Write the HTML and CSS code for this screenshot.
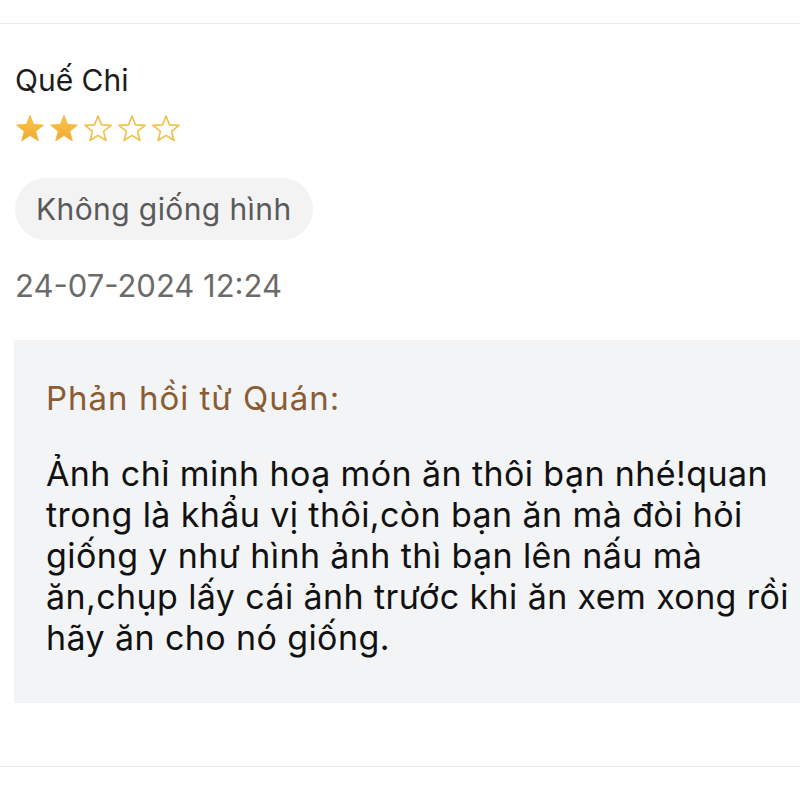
FILE: index.html
```html
<!DOCTYPE html>
<html lang="vi">
<head>
<meta charset="utf-8">
<link rel="stylesheet" href="styles.css">
</head>
<body>
<div class="page">
  <div class="divider top"></div>
  <div class="review">
    <div class="name">Quế Chi</div>
    <div class="stars">
      <svg class="star" viewBox="-1 -1 32 30"><defs><linearGradient id="g" x1="0" y1="0" x2="0" y2="1"><stop offset="0" stop-color="#f9c64c"/><stop offset="1" stop-color="#f0a832"/></linearGradient></defs><path d="M15 0L18.82 9.74 29.27 10.36 21.18 17.01 23.82 27.14 15 21.5 6.18 27.14 8.82 17.01 0.73 10.36 11.18 9.74Z" fill="url(#g)" stroke="#f3b840" stroke-width="1" stroke-linejoin="round"/></svg>
      <svg class="star" viewBox="-1 -1 32 30"><path d="M15 0L18.82 9.74 29.27 10.36 21.18 17.01 23.82 27.14 15 21.5 6.18 27.14 8.82 17.01 0.73 10.36 11.18 9.74Z" fill="url(#g)" stroke="#f3b840" stroke-width="1" stroke-linejoin="round"/></svg>
      <svg class="star" viewBox="-1 -1 32 30"><path d="M15 0.6L18.7 10.1 28.9 10.7 21 17.1 23.5 26.8 15 21.3 6.5 26.8 9 17.1 1.1 10.7 11.3 10.1Z" fill="none" stroke="#efc24a" stroke-width="1.8" stroke-linejoin="round"/></svg>
      <svg class="star" viewBox="-1 -1 32 30"><path d="M15 0.6L18.7 10.1 28.9 10.7 21 17.1 23.5 26.8 15 21.3 6.5 26.8 9 17.1 1.1 10.7 11.3 10.1Z" fill="none" stroke="#efc24a" stroke-width="1.8" stroke-linejoin="round"/></svg>
      <svg class="star" viewBox="-1 -1 32 30"><path d="M15 0.6L18.7 10.1 28.9 10.7 21 17.1 23.5 26.8 15 21.3 6.5 26.8 9 17.1 1.1 10.7 11.3 10.1Z" fill="none" stroke="#efc24a" stroke-width="1.8" stroke-linejoin="round"/></svg>
    </div>
    <div class="chip-row"><span class="chip">Không giống hình</span></div>
    <div class="date">24-07-2024 12:24</div>
    <div class="reply">
      <div class="reply-title">Phản hồi từ Quán:</div>
      <div class="reply-body">Ảnh chỉ minh hoạ món ăn thôi bạn nhé!quan<br>trong là khẩu vị thôi,còn bạn ăn mà đòi hỏi<br>giống y như hình ảnh thì bạn lên nấu mà<br>ăn,chụp lấy cái ảnh trước khi ăn xem xong rồi<br>hãy ăn cho nó giống.</div>
    </div>
  </div>
  <div class="divider bottom"></div>
</div>
</body>
</html>
```
FILE: styles.css
```css
html, body {
  margin: 0;
  padding: 0;
  background: #ffffff;
}
body {
  font-family: Inter, "Noto Sans", sans-serif;
  width: 800px;
  height: 800px;
  overflow: hidden;
}
.page {
  padding-top: 23px;
}
.divider {
  height: 1px;
  background: #ebebeb;
}
.review {
  padding-left: 15px;
  padding-top: 36px;
}
.name {
  font-size: 30px;
  line-height: 40px;
  color: #1c1c1c;
}
.stars {
  display: flex;
  gap: 4px;
  margin-top: 14px;
  height: 29px;
}
.star {
  width: 30px;
  height: 29px;
  display: block;
}
.chip-row {
  margin-top: 35px;
  display: flex;
}
.chip {
  display: inline-flex;
  align-items: center;
  height: 62px;
  padding: 0 21px;
  border-radius: 31px;
  background: #f3f3f3;
  color: #5a5a5a;
  font-size: 30px;
  letter-spacing: 0.4px;
}
.date {
  margin-top: 26px;
  font-size: 31px;
  line-height: 40px;
  color: #6b6b6b;
}
.reply {
  margin-top: 34px;
  margin-left: -1px;
  background: #f3f4f6;
  height: 363px;
  box-sizing: border-box;
  padding: 38px 0 0 32px;
}
.reply-title {
  font-size: 33px;
  line-height: 40px;
  letter-spacing: 1px;
  color: #8a5c33;
}
.reply-body {
  margin-top: 35px;
  font-size: 34px;
  line-height: 41px;
  letter-spacing: 0.4px;
  white-space: nowrap;
  color: #111111;
}
.divider.bottom {
  margin-top: 63px;
}
```
